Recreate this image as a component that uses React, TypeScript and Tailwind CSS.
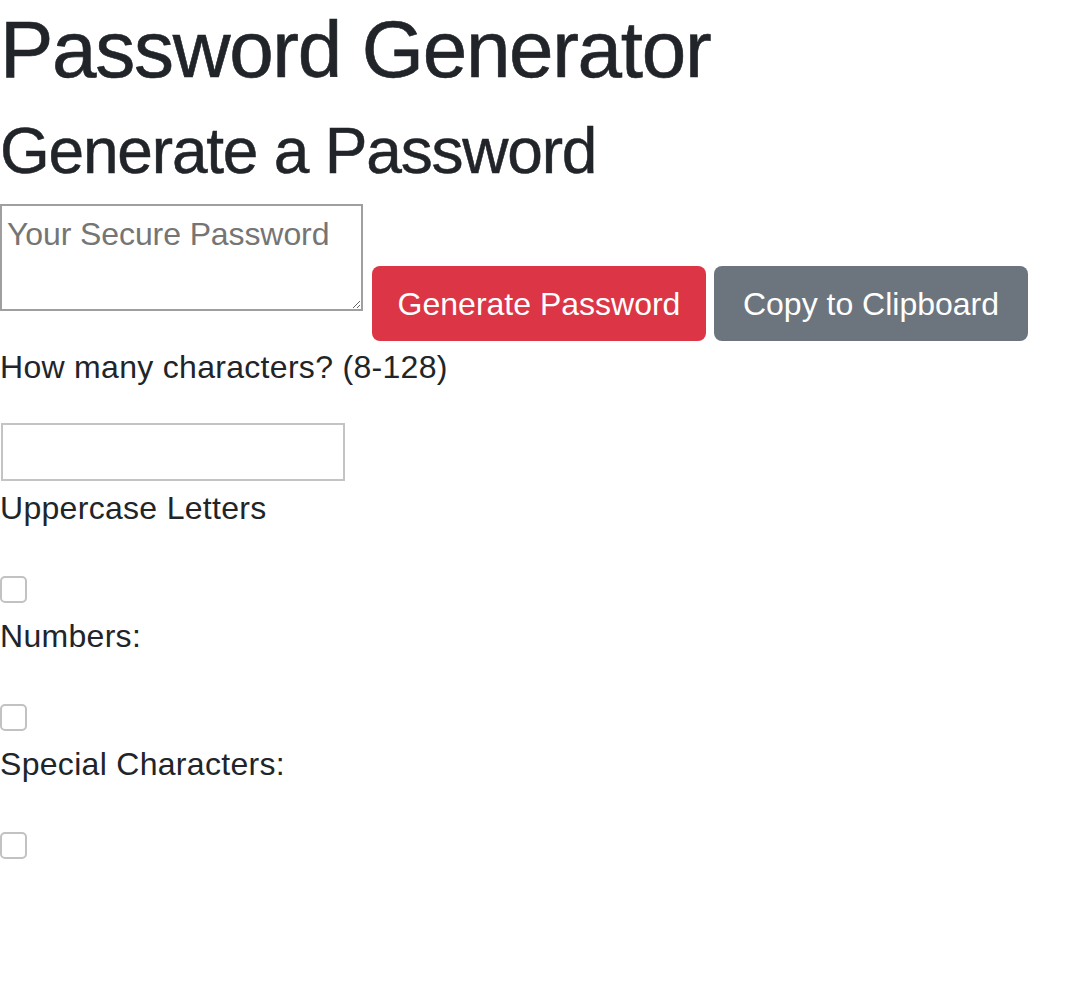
import React from 'react'

const font = { fontFamily: '"Liberation Sans", Arial, sans-serif' }

function CheckOption({ label }: { label: string }) {
  return (
    <div>
      <label className="block h-[48px] leading-[48px] text-[32px] tracking-[0.3px] text-[#212529]">{label}</label>
      <input
        type="checkbox"
        className="block mt-[44px] mb-[9px] w-[27px] h-[27px] appearance-none rounded-[5px] border-2 border-[#c2c2c2] bg-white"
      />
    </div>
  )
}

export default function App() {
  return (
    <div className="min-h-[988px] bg-white text-[#212529]" style={font}>
      <h1 className="h-[96px] pt-[3px] mb-[16px] text-[80px] leading-[93px] font-medium tracking-[-1.3px] [-webkit-text-stroke:0.6px_#212529]">
        Password Generator
      </h1>
      <h2 className="h-[77px] pt-[2px] mb-[15px] text-[64px] leading-[75px] font-medium tracking-[-1.2px] [-webkit-text-stroke:0.5px_#212529]">
        Generate a Password
      </h2>

      <div className="flex items-start">
        <textarea
          rows={2}
          placeholder="Your Secure Password"
          className="block w-[363px] h-[107px] border-2 border-[#9f9f9f] px-[5px] py-[4px] text-[32px] leading-[48px] tracking-[-0.1px] placeholder:text-[#757575] resize"
        />
        <button className="mt-[62px] ml-[9px] w-[334px] h-[75px] rounded-[8px] bg-[#dc3545] text-white text-[32px] leading-[48px] text-center">
          Generate Password
        </button>
        <button className="mt-[62px] ml-[8px] w-[314px] h-[75px] rounded-[8px] bg-[#6c757d] text-white text-[32px] leading-[48px] text-center">
          Copy to Clipboard
        </button>
      </div>

      <label className="block mt-[2px] h-[48px] leading-[48px] text-[32px] tracking-[0.3px]">How many characters? (8-128)</label>
      <input
        type="text"
        className="block mt-[32px] ml-[1px] w-[344px] h-[58px] border-2 border-[#c4c4c4] px-[2px] text-[32px] leading-[48px]"
      />

      <div className="mt-[3px]">
        <CheckOption label="Uppercase Letters" />
        <CheckOption label="Numbers:" />
        <CheckOption label="Special Characters:" />
      </div>
    </div>
  )
}
